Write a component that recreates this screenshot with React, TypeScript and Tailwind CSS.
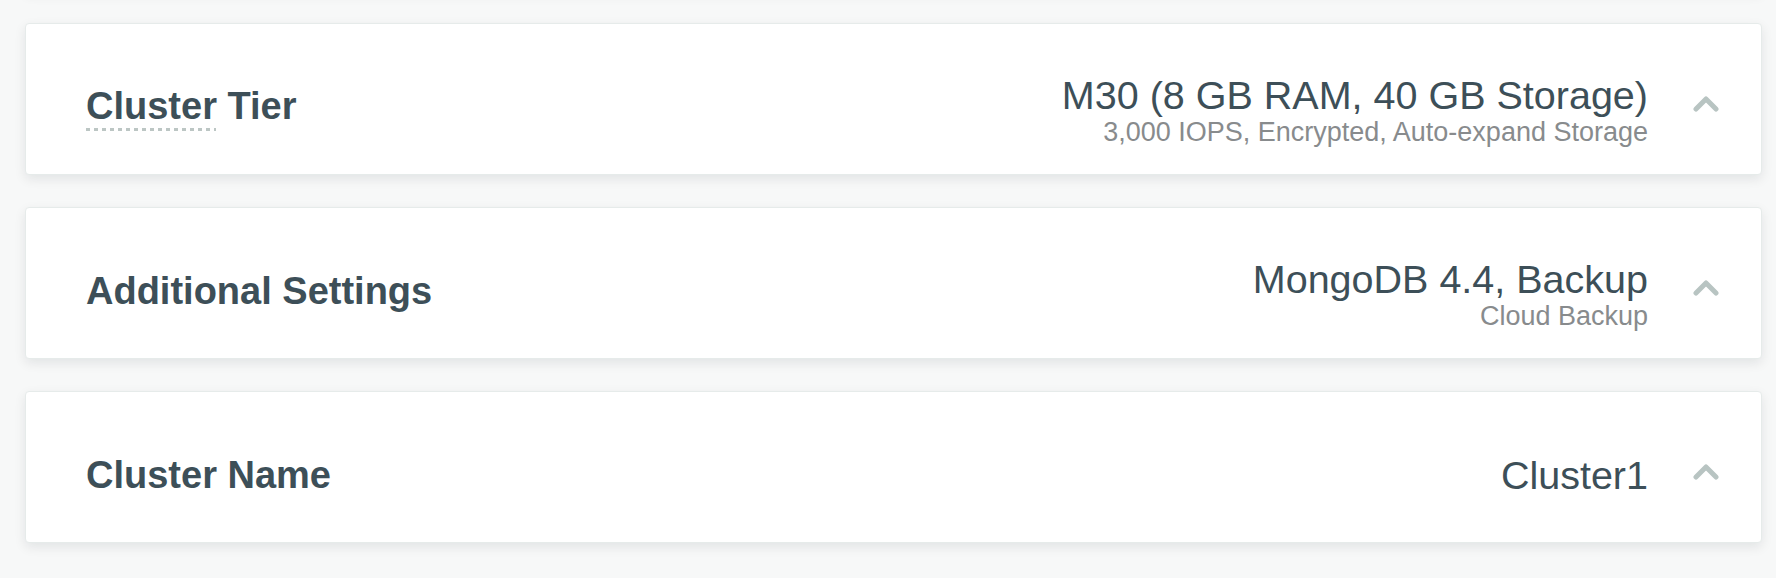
import React from "react";

const Chevron = () => (
  <svg width="26" height="16" viewBox="0 0 26 16" className="shrink-0 mb-[7px]">
    <polyline
      points="3,13 13,3 23,13"
      fill="none"
      stroke="#b8c4c2"
      strokeWidth="5"
      strokeLinecap="round"
      strokeLinejoin="round"
    />
  </svg>
);

type CardProps = {
  title?: string;
  underline?: boolean;
  main?: string;
  sub?: string;
  className?: string;
};

const Card = ({ title, underline, main, sub, className = "" }: CardProps) => (
  <div
    className={`h-[152px] shrink-0 rounded-[4px] border border-[#e6ebea] bg-white shadow-[0_4px_12px_rgba(6,22,33,0.09)] flex items-center pt-[16px] pl-[60px] pr-[42px] font-['Liberation_Sans',Arial,sans-serif] ${className}`}
  >
    <div className="flex-1 min-w-0">
      {title && (
        <div className="flex flex-col">
          <div className="text-[38px] leading-[44px] font-bold text-[#3d4f58] whitespace-nowrap">
            {title}
          </div>
          {underline && (
            <div className="h-[3px] w-[130px] bg-[repeating-linear-gradient(90deg,#bcc6c4_0_4px,transparent_4px_8px)]" />
          )}
        </div>
      )}
    </div>
    {main && (
      <div className="flex flex-col items-end text-right mr-[45px]">
        <div className="text-[39.5px] leading-[48px] text-[#3d4f58] whitespace-nowrap">{main}</div>
        {sub && (
          <div className="text-[27px] leading-[22px] mt-[2px] text-[#888b8d] whitespace-nowrap">{sub}</div>
        )}
      </div>
    )}
    {main && <Chevron />}
  </div>
);

export default function App() {
  return (
    <div className="w-[1776px] h-[578px] overflow-hidden bg-[#f7f8f8]">
      <div className="flex flex-col gap-[32px] pl-[25px] pr-[14px]">
        <Card className="-mt-[161px]" />
        <Card
          title="Cluster Tier"
          underline
          main="M30 (8 GB RAM, 40 GB Storage)"
          sub="3,000 IOPS, Encrypted, Auto-expand Storage"
        />
        <Card title="Additional Settings" main="MongoDB 4.4, Backup" sub="Cloud Backup" />
        <Card title="Cluster Name" main="Cluster1" />
      </div>
    </div>
  );
}
